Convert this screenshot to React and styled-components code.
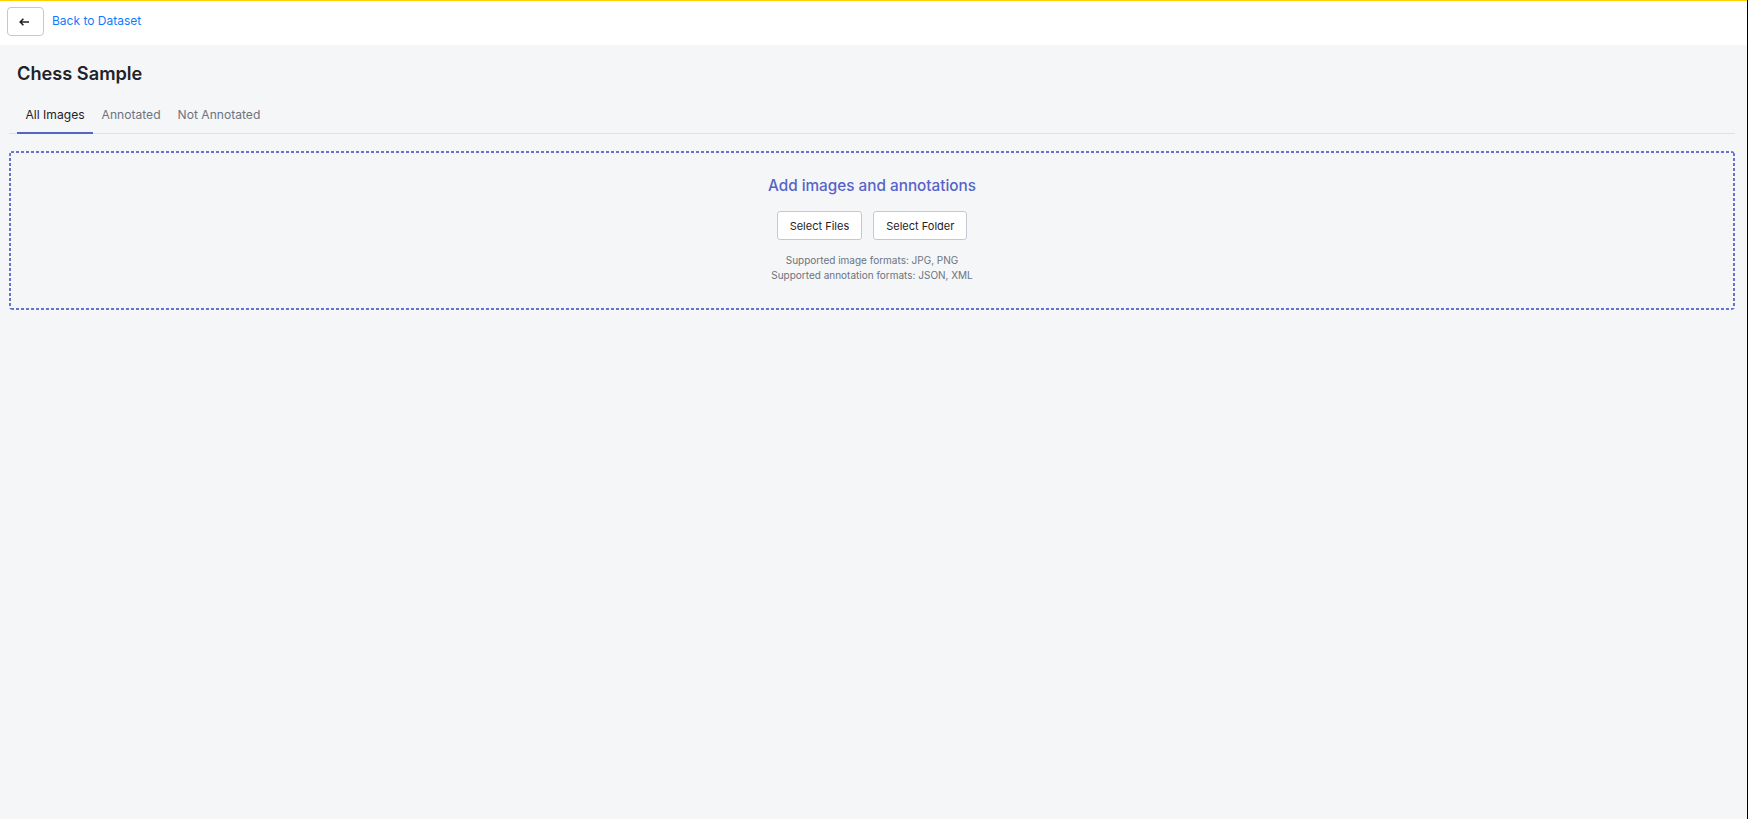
import styled, { createGlobalStyle } from "styled-components";
import { useState } from "react";

const GlobalStyle = createGlobalStyle`
  html, body {
    margin: 0;
    padding: 0;
    background-color: #000;
  }
  body {
    font-family: Inter, "Liberation Sans", sans-serif;
    -webkit-font-smoothing: antialiased;
  }
`;

const Page = styled.div`
  width: 1747px;
  height: 819px;
  background-color: #f5f6f8;
  border-top: 1px solid #ffd000;
  box-sizing: border-box;
`;

const TopBar = styled.div`
  display: flex;
  align-items: flex-start;
  height: 44px;
  background-color: #fff;
  padding: 6px 0 0 7px;
  box-sizing: border-box;
`;

const BackBtn = styled.button`
  display: flex;
  align-items: center;
  justify-content: center;
  width: 37px;
  height: 29px;
  padding: 0 3px 0 0;
  background-color: #fff;
  border: 1px solid #c4c9d0;
  border-radius: 4px;
  cursor: pointer;
`;

const BackLink = styled.a`
  margin: 6px 0 0 8px;
  font-size: 12px;
  line-height: 16px;
  color: #0f7bff;
  text-decoration: none;
`;

const Content = styled.div`
  padding: 0 12px 0 9px;
`;

const Title = styled.h1`
  margin: 14px 0 0 8px;
  font-size: 18.2px;
  line-height: 28px;
  font-weight: 600;
  color: #1f2328;
`;

const Tabs = styled.div`
  display: flex;
  margin-top: 13px;
  padding-left: 8px;
  border-bottom: 1px solid #dfe1e5;
`;

const Tab = styled.button`
  height: 34px;
  padding: 0 8.5px 4px;
  margin-bottom: -1px;
  background: none;
  border: none;
  border-bottom: 2px solid ${(p) => (p.$active ? "#5664c8" : "transparent")};
  font-family: inherit;
  font-size: 12.1px;
  color: ${(p) => (p.$active ? "#1f2328" : "#6b7480")};
  cursor: pointer;
`;

// dash pattern drawn by hand, the browser's dashed border comes out too long
const dash = "linear-gradient(90deg, #6573d0 0 3px, transparent 3px)";
const dashV = "linear-gradient(180deg, #6573d0 0 3px, transparent 3px)";

const DropZone = styled.div`
  display: flex;
  flex-direction: column;
  align-items: center;
  height: 159px;
  margin-top: 17px;
  padding-top: 24px;
  border-radius: 4px;
  box-sizing: border-box;
  background-image: ${dash}, ${dash}, ${dashV}, ${dashV};
  background-size: 5px 2px, 5px 2px, 2px 5px, 2px 5px;
  background-position: 2px 0, 2px 100%, 0 2px, 100% 2px;
  background-repeat: repeat-x, repeat-x, repeat-y, repeat-y;
`;

const DropTitle = styled.div`
  font-size: 15.3px;
  line-height: 22px;
  font-weight: 500;
  color: #5664c8;
`;

const BtnRow = styled.div`
  display: flex;
  gap: 11px;
  margin-top: 14px;
`;

const SelectBtn = styled.button`
  height: 29px;
  padding: 0 12px;
  background-color: #fff;
  border: 1px solid #c4c9d0;
  border-radius: 3px;
  font-family: inherit;
  font-size: 11px;
  color: #1f2328;
  cursor: pointer;
`;

const Hint = styled.div`
  margin-top: 13px;
  font-size: 10px;
  line-height: 15px;
  text-align: center;
  color: #6b7480;
`;

const tabs = ["All Images", "Annotated", "Not Annotated"];

function App() {
  const [activeTab, setActiveTab] = useState("All Images");

  return (
    <>
      <GlobalStyle />
      <Page>
        <TopBar>
          <BackBtn aria-label="Back">
            <svg width="10" height="8" viewBox="0 0 10 8" fill="none">
              <path d="M10 4H1.5M4.4 .8 1.2 4l3.2 3.2" stroke="#1f2328" strokeWidth="1.6" />
            </svg>
          </BackBtn>
          <BackLink href="#">Back to Dataset</BackLink>
        </TopBar>
        <Content>
          <Title>Chess Sample</Title>
          <Tabs>
            {tabs.map((t) => (
              <Tab key={t} $active={t === activeTab} onClick={() => setActiveTab(t)}>
                {t}
              </Tab>
            ))}
          </Tabs>
          <DropZone>
            <DropTitle>Add images and annotations</DropTitle>
            <BtnRow>
              <SelectBtn>Select Files</SelectBtn>
              <SelectBtn>Select Folder</SelectBtn>
            </BtnRow>
            <Hint>
              Supported image formats: JPG, PNG
              <br />
              Supported annotation formats: JSON, XML
            </Hint>
          </DropZone>
        </Content>
      </Page>
    </>
  );
}

export default App;
